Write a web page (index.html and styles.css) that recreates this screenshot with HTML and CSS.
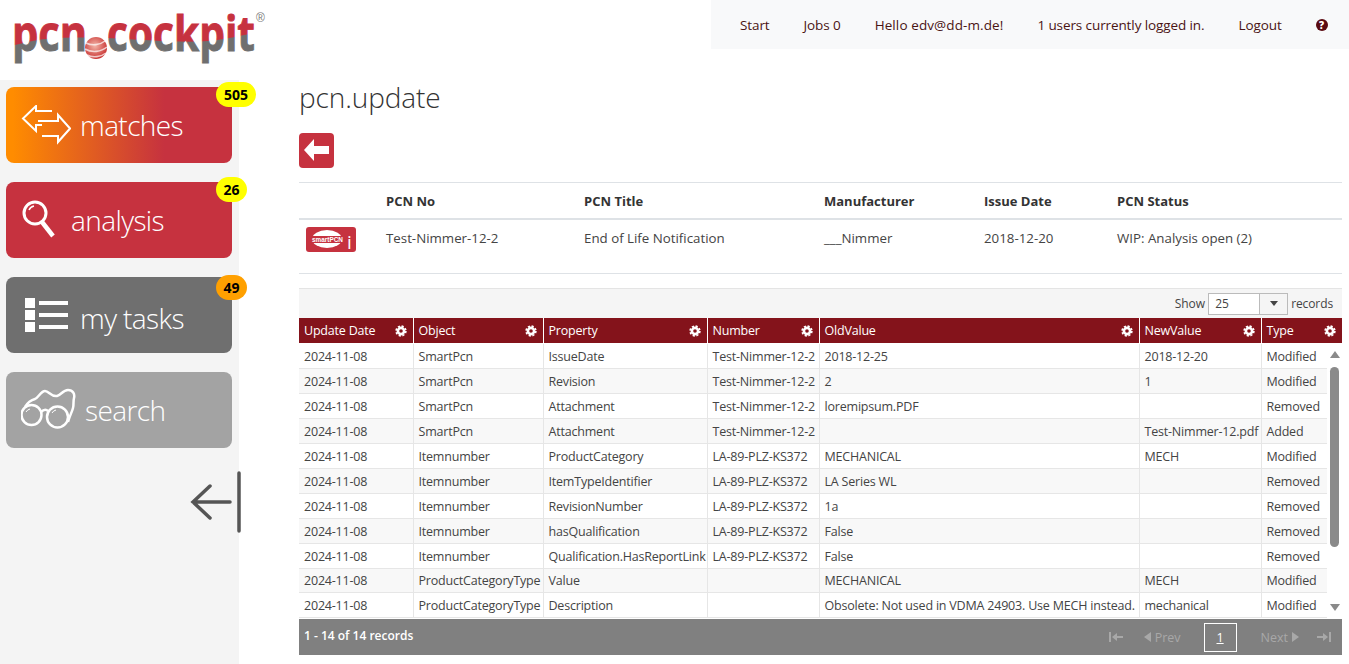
FILE: index.html
```html
<!DOCTYPE html>
<html lang="en">
<head>
    <meta charset="UTF-8">
    <meta name="viewport" content="width=device-width, initial-scale=1.0">
    <title>pcn.cockpit - pcn.update</title>
    <link rel="stylesheet" href="styles.css">
</head>
<body>
    <svg class="defs" width="0" height="0">
        <defs>
            <symbol id="gear" viewBox="0 0 12 12">
                <circle cx="6" cy="6" r="3.1" fill="none" stroke="#fff" stroke-width="2.6"/>
                <circle cx="6" cy="6" r="4.9" fill="none" stroke="#fff" stroke-width="1.6" stroke-dasharray="2.2 1.65"/>
            </symbol>
        </defs>
    </svg>

    <header class="topbar">
        <div class="logo">
            <svg width="270" height="80" viewBox="0 0 270 80">
                <defs>
                    <pattern id="logoPcn" patternUnits="userSpaceOnUse" width="320" height="80">
                        <rect width="320" height="80" fill="#c6323f"/>
                        <path d="M0 46 C24 40 47 36 105 38 L320 38 L320 80 L0 80 Z" fill="#6f6f6f"/>
                    </pattern>
                    <pattern id="logoCockpit" patternUnits="userSpaceOnUse" width="320" height="80">
                        <rect width="320" height="80" fill="#c6323f"/>
                        <path d="M0 38 C48 40 103 44 133 40 C157 37 181 32 217 26 L320 26 L320 80 L0 80 Z" fill="#6f6f6f"/>
                    </pattern>
                    <radialGradient id="ball" cx="45%" cy="40%" r="65%">
                        <stop offset="0" stop-color="#f3b5a8"/>
                        <stop offset="1" stop-color="#c62a2a"/>
                    </radialGradient>
                </defs>
                <g transform="translate(12 0) scale(.85 1)">
                    <text class="logo-text" y="51" fill="url(#logoPcn)" stroke="url(#logoPcn)" stroke-width="0.9">pcn</text>
                </g>
                <g transform="translate(107 0) scale(.83 1)">
                    <text class="logo-text" y="51" fill="url(#logoCockpit)" stroke="url(#logoCockpit)" stroke-width="0.9">cockpit</text>
                </g>
                <circle cx="96" cy="48" r="11" fill="url(#ball)"/>
                <path d="M86 43 C92 46 100 45 105 41 M85 49 C92 53 101 52 107 47 M87 55 C93 58 101 57 106 53" fill="none" stroke="#fff" stroke-width="1.6" opacity=".7"/>
            </svg>
            <span class="logo-reg">®</span>
        </div>
        <nav class="topnav">
            <a>Start</a>
            <a>Jobs 0</a>
            <a class="nav-hello">Hello edv@dd-m.de!</a>
            <a>1 users currently logged in.</a>
            <a>Logout</a>
            <span class="help">?</span>
        </nav>
    </header>

    <div class="layout">
        <aside class="sidebar">
            <a class="tile tile-matches">
                <svg class="tile-icon" width="50" height="40" viewBox="0 0 50 40" fill="none" stroke="#fff" stroke-width="2">
                    <path d="M31 6 H15 V1 L2 13.5 L15 26 V20 H21"/>
                    <path d="M21 31 H37 V37 L49 23.5 L37 10 V16 H17"/>
                </svg>
                <span>matches</span>
                <b class="badge badge-wide">505</b>
            </a>
            <a class="tile tile-analysis">
                <svg class="tile-icon" width="41" height="44" viewBox="0 0 41 44" fill="none" stroke="#fff">
                    <circle cx="14" cy="15" r="11" stroke-width="3"/>
                    <path d="M21 24 L32 38" stroke-width="4.5"/>
                    <path d="M8 12 A7 7 0 0 1 13 8" stroke-width="1.5"/>
                </svg>
                <span>analysis</span>
                <b class="badge">26</b>
            </a>
            <a class="tile tile-tasks">
                <svg class="tile-icon" width="50" height="44" viewBox="0 0 50 44" fill="#fff">
                    <rect x="4" y="5" width="10" height="10"/>
                    <rect x="4" y="17" width="10" height="10"/>
                    <rect x="4" y="29" width="10" height="10"/>
                    <rect x="18" y="8" width="29" height="4"/>
                    <rect x="18" y="20" width="29" height="4"/>
                    <rect x="18" y="32" width="29" height="4"/>
                </svg>
                <span>my tasks</span>
                <b class="badge badge-orange">49</b>
            </a>
            <a class="tile tile-search">
                <svg class="tile-icon" width="55" height="52" viewBox="0 0 55 52" fill="none" stroke="#fff" stroke-width="2.5">
                    <circle cx="10.5" cy="31" r="10"/>
                    <circle cx="36.5" cy="33" r="10.5"/>
                    <path d="M4 23 C7 18 10 16 14 15 C18 13 20 7 24 7 C28 7 30 13 36 12 C40 11 42 6 47 6 C52 6 54 10 53 14 C52 18 53 20 52 24 C51 28 49 31 47 38"/>
                    <path d="M20 28 C23 25 25 25 27 27"/>
                    <path d="M5 28 A6 6 0 0 1 9 25 M31 29 A6 6 0 0 1 35 26" stroke-width="1"/>
                </svg>
                <span>search</span>
            </a>
            <div class="collapse">
                <svg width="52" height="62" viewBox="0 0 52 62" fill="none" stroke="#555" stroke-linecap="round">
                    <path d="M41 31 H4 M21 15 L4 31 L21 47" stroke-width="3.5"/>
                    <path d="M50 2 V60" stroke-width="3.5"/>
                </svg>
            </div>
        </aside>

        <main class="content">
            <h1>pcn.update</h1>
            <a class="back-btn">
                <svg width="35" height="35" viewBox="0 0 35 35" fill="#fff"><path d="M5 17 L15 6 V13 H30 V21 H15 V28 Z"/></svg>
            </a>

            <table class="info-table">
                <thead>
                    <tr>
                        <th class="info-icon"></th>
                        <th class="info-no">PCN No</th>
                        <th class="info-title">PCN Title</th>
                        <th class="info-man">Manufacturer</th>
                        <th class="info-date">Issue Date</th>
                        <th>PCN Status</th>
                    </tr>
                </thead>
                <tbody>
                    <tr>
                        <td class="info-icon">
                            <svg class="smart-icon" width="50" height="25" viewBox="0 0 50 25">
                                <rect width="50" height="25" rx="3" fill="#c6323f"/>
                                <ellipse cx="21" cy="12" rx="15" ry="9" fill="#fff"/>
                                <rect x="5" y="9" width="32" height="7" fill="#c6323f"/>
                                <text class="smart-text" x="6" y="15">smartPCN</text>
                                <text class="smart-i" x="41" y="22">i</text>
                            </svg>
                        </td>
                        <td>Test-Nimmer-12-2</td>
                        <td>End of Life Notification</td>
                        <td>___Nimmer</td>
                        <td>2018-12-20</td>
                        <td>WIP: Analysis open (2)</td>
                    </tr>
                </tbody>
            </table>

            <section class="grid">
                <div class="grid-toolbar">
                    <span>Show</span>
                    <div class="size-select">
                        <span class="size-value">25</span>
                        <span class="size-arrow"><i></i></span>
                    </div>
                    <span class="size-label">records</span>
                </div>
                <table class="grid-table grid-head">
                    <colgroup>
                        <col class="c-date"><col class="c-object"><col class="c-prop"><col class="c-num"><col class="c-old"><col class="c-new"><col class="c-type-head">
                    </colgroup>
                    <thead>
                        <tr>
                            <th><div>Update Date<svg><use href="#gear"/></svg></div></th>
                            <th><div>Object<svg><use href="#gear"/></svg></div></th>
                            <th><div>Property<svg><use href="#gear"/></svg></div></th>
                            <th><div>Number<svg><use href="#gear"/></svg></div></th>
                            <th><div>OldValue<svg><use href="#gear"/></svg></div></th>
                            <th><div>NewValue<svg><use href="#gear"/></svg></div></th>
                            <th><div>Type<svg><use href="#gear"/></svg></div></th>
                        </tr>
                    </thead>
                </table>
                <div class="grid-body">
                    <table class="grid-table">
                        <colgroup>
                            <col class="c-date"><col class="c-object"><col class="c-prop"><col class="c-num"><col class="c-old"><col class="c-new"><col class="c-type">
                        </colgroup>
                        <tbody>
                            <tr><td>2024-11-08</td><td>SmartPcn</td><td>IssueDate</td><td>Test-Nimmer-12-2</td><td>2018-12-25</td><td>2018-12-20</td><td>Modified</td></tr>
                            <tr><td>2024-11-08</td><td>SmartPcn</td><td>Revision</td><td>Test-Nimmer-12-2</td><td>2</td><td>1</td><td>Modified</td></tr>
                            <tr><td>2024-11-08</td><td>SmartPcn</td><td>Attachment</td><td>Test-Nimmer-12-2</td><td>loremipsum.PDF</td><td></td><td>Removed</td></tr>
                            <tr><td>2024-11-08</td><td>SmartPcn</td><td>Attachment</td><td>Test-Nimmer-12-2</td><td></td><td>Test-Nimmer-12.pdf</td><td>Added</td></tr>
                            <tr><td>2024-11-08</td><td>Itemnumber</td><td>ProductCategory</td><td>LA-89-PLZ-KS372</td><td>MECHANICAL</td><td>MECH</td><td>Modified</td></tr>
                            <tr><td>2024-11-08</td><td>Itemnumber</td><td>ItemTypeIdentifier</td><td>LA-89-PLZ-KS372</td><td>LA Series WL</td><td></td><td>Removed</td></tr>
                            <tr><td>2024-11-08</td><td>Itemnumber</td><td>RevisionNumber</td><td>LA-89-PLZ-KS372</td><td>1a</td><td></td><td>Removed</td></tr>
                            <tr><td>2024-11-08</td><td>Itemnumber</td><td>hasQualification</td><td>LA-89-PLZ-KS372</td><td>False</td><td></td><td>Removed</td></tr>
                            <tr><td>2024-11-08</td><td>Itemnumber</td><td>Qualification.HasReportLink</td><td>LA-89-PLZ-KS372</td><td>False</td><td></td><td>Removed</td></tr>
                            <tr class="row-short"><td>2024-11-08</td><td>ProductCategoryType</td><td>Value</td><td></td><td>MECHANICAL</td><td>MECH</td><td>Modified</td></tr>
                            <tr><td>2024-11-08</td><td>ProductCategoryType</td><td>Description</td><td></td><td>Obsolete: Not used in VDMA 24903. Use MECH instead.</td><td>mechanical</td><td>Modified</td></tr>
                        </tbody>
                    </table>
                    <div class="scrollbar">
                        <i class="sb-up"></i>
                        <i class="sb-thumb"></i>
                        <i class="sb-down"></i>
                    </div>
                </div>
                <div class="pager">
                    <span class="pager-info">1 - 14 of 14 records</span>
                    <div class="pager-links">
                        <svg width="14" height="10" viewBox="0 0 14 10"><path d="M0 0H2V10H0ZM3 5L8 1V4H14V6H8V9Z"/></svg>
                        <span class="pager-step pager-prev"><svg width="7" height="10" viewBox="0 0 7 10"><path d="M7 0V10L0 5Z"/></svg>Prev</span>
                        <a class="pager-current">1</a>
                        <span class="pager-step pager-next">Next<svg width="7" height="10" viewBox="0 0 7 10"><path d="M0 0V10L7 5Z"/></svg></span>
                        <svg width="14" height="10" viewBox="0 0 14 10"><path d="M14 0H12V10H14ZM11 5L6 1V4H0V6H6V9Z"/></svg>
                    </div>
                </div>
            </section>
        </main>
    </div>
</body>
</html>
```

FILE: styles.css
```css
html, body {
    height: 100%;
}

body {
    margin: 0;
    font-family: "Open Sans", "Noto Sans", sans-serif;
    font-size: 13px;
    color: #444;
    background-color: #fff;
    overflow: hidden;
}

.defs {
    position: absolute;
}

/* top */
.topbar {
    display: flex;
    justify-content: space-between;
    align-items: flex-start;
    height: 80px;
}

.logo {
    position: relative;
}

.logo svg {
    display: block;
}

.logo-text {
    font-family: "Open Sans", sans-serif;
    font-size: 49px;
    font-weight: 700;
}

.logo-reg {
    position: absolute;
    top: 11px;
    left: 256px;
    font-family: "Liberation Sans", sans-serif;
    font-size: 12px;
    color: #777;
}

.topnav {
    display: flex;
    align-items: center;
    gap: 34px;
    width: 638px;
    height: 49px;
    box-sizing: border-box;
    padding-left: 29px;
    background-color: #f8f9fa;
    color: #4a1414;
    font-size: 13.5px;
    letter-spacing: -0.1px;
}

.nav-hello {
    letter-spacing: 0.1px;
}

.help {
    display: flex;
    align-items: center;
    justify-content: center;
    width: 12px;
    height: 12px;
    border-radius: 50%;
    background-color: #5a0a10;
    color: #fff;
    font-size: 10px;
    font-weight: 800;
    letter-spacing: 0;
}

/* sidebar */
.layout {
    display: flex;
    height: 584px;
}

.sidebar {
    flex: 0 0 239px;
    box-sizing: border-box;
    padding: 7px 7px 0 6px;
    background-color: #f4f4f4;
}

.tile {
    position: relative;
    display: flex;
    align-items: center;
    gap: 9px;
    height: 76px;
    margin-bottom: 19px;
    padding-left: 15px;
    border-radius: 8px;
    color: #fff;
    font-size: 28px;
    font-weight: 300;
    letter-spacing: -0.6px;
}

.tile-icon {
    flex: none;
}

.tile-matches {
    background: linear-gradient(to right, #ff8c00 3%, #c6323f 70%);
}

.tile-analysis {
    background-color: #c6323f;
}

.tile-tasks {
    background-color: #6f6f6f;
}

.tile-tasks span {
    margin-top: 5px;
}

.tile-search {
    background-color: #a3a3a3;
}

.badge {
    position: absolute;
    top: -5px;
    left: 210px;
    min-width: 21px;
    height: 25px;
    padding: 0 5px;
    border-radius: 13px;
    background-color: #ffff00;
    color: #000;
    font-size: 14px;
    font-weight: 700;
    line-height: 25px;
    letter-spacing: 0;
    text-align: center;
}

.badge-wide {
    min-width: 30px;
}

.badge-orange {
    top: -2px;
    background-color: #ffa000;
}

.collapse {
    display: flex;
    justify-content: flex-end;
    margin: 23px -9px 0 0;
}

/* main */
.content {
    flex: 1;
    min-width: 0;
    padding-left: 60px;
    padding-right: 7px;
}

h1 {
    margin: 0;
    height: 53px;
    color: #333;
    font-size: 28px;
    font-weight: 300;
    line-height: 35px;
    letter-spacing: -0.1px;
}

.back-btn {
    display: block;
    width: 35px;
    height: 35px;
    border-radius: 4px;
    background-color: #c6323f;
}

.back-btn svg {
    display: block;
}

.info-table {
    width: 100%;
    margin-top: 14px;
    border-collapse: collapse;
    border-top: 1px solid #dee2e6;
    border-bottom: 1px solid #dee2e6;
}

.info-table th {
    height: 35px;
    padding: 0 0 0 7px;
    border-bottom: 2px solid #dee2e6;
    color: #333;
    font-weight: 700;
    text-align: left;
}

.info-table td {
    height: 53px;
    padding: 0 0 0 7px;
    vertical-align: top;
    font-size: 13.3px;
    line-height: 36px;
}

.info-icon {
    width: 73px;
}

.info-table td .smart-icon {
    display: block;
    margin-top: 7px;
    overflow: visible;
}

.info-no {
    width: 191px;
}

.info-title {
    width: 233px;
}

.info-man {
    width: 153px;
}

.info-date {
    width: 126px;
}

.smart-text {
    font-family: "Liberation Sans", sans-serif;
    font-size: 6.4px;
    font-weight: 700;
    fill: #fff;
}

.smart-i {
    font-family: "Open Sans", sans-serif;
    font-size: 19px;
    fill: #fff;
}

/* grid */
.grid {
    margin-top: 14px;
    border-top: 1px solid #e4e4e4;
}

.grid-toolbar {
    display: flex;
    justify-content: flex-end;
    align-items: center;
    gap: 3px;
    height: 29px;
    padding-right: 9px;
    background-color: #f5f5f5;
    font-size: 12px;
}

.size-select {
    display: flex;
    width: 78px;
    height: 20px;
    border: 1px solid #bbb;
    background-color: #fff;
    line-height: 20px;
}

.size-label {
    letter-spacing: -0.1px;
}

.size-value {
    flex: 1;
    padding-left: 6px;
}

.size-arrow {
    display: flex;
    align-items: center;
    justify-content: center;
    width: 27px;
    border-left: 1px solid #bbb;
    background-color: #f5f5f5;
}

.size-arrow i {
    border-top: 5px solid #444;
    border-left: 4px solid transparent;
    border-right: 4px solid transparent;
}

.grid-table {
    table-layout: fixed;
    border-collapse: collapse;
    font-size: 12.5px;
    letter-spacing: -0.2px;
}

.grid-head {
    width: 1043px;
}

.c-date { width: 114px; }
.c-object { width: 130px; }
.c-prop { width: 164px; }
.c-num { width: 112px; }
.c-old { width: 320px; }
.c-new { width: 122px; }
.c-type { width: 66px; }
.c-type-head { width: 81px; }

.grid-head th {
    height: 25px;
    padding: 0 5px;
    border-right: 1px solid #fff;
    background-color: #84131b;
    color: #fff;
    font-weight: 400;
    text-align: left;
}

.grid-head th:last-child {
    border-right: 0;
}

.grid-head th div {
    display: flex;
    justify-content: space-between;
    align-items: center;
}

.grid-head svg {
    width: 12px;
    height: 12px;
    margin-right: 1px;
}

.grid-body {
    position: relative;
    height: 276px;
    padding-top: 1px;
    box-sizing: border-box;
    overflow: hidden;
}

.grid-body .grid-table {
    width: 1028px;
}

.grid-body td {
    height: 24px;
    padding: 0 5px;
    border-right: 1px solid #e6e6e6;
    border-bottom: 1px solid #e6e6e6;
    white-space: nowrap;
    overflow: hidden;
}

.grid-body .row-short td {
    height: 23px;
}

.grid-body tr:nth-child(even) td {
    background-color: #f8f8f8;
}

.scrollbar {
    position: absolute;
    top: 0;
    right: 0;
    bottom: 0;
    width: 15px;
    background-color: #fff;
}

.scrollbar i {
    position: absolute;
    left: 3px;
}

.sb-up {
    top: 8px;
    border-bottom: 7px solid #8a8a8a;
    border-left: 5px solid transparent;
    border-right: 5px solid transparent;
}

.sb-down {
    bottom: 8px;
    border-top: 7px solid #8a8a8a;
    border-left: 5px solid transparent;
    border-right: 5px solid transparent;
}

.scrollbar .sb-thumb {
    top: 24px;
    left: 3px;
    width: 9px;
    height: 180px;
    border-radius: 5px;
    background-color: #8a8a8a;
}

.pager {
    display: flex;
    justify-content: space-between;
    align-items: center;
    height: 36px;
    padding: 0 11px 0 5px;
    background-color: #808080;
    color: #fff;
    font-size: 12px;
}

.pager-info {
    padding-bottom: 4px;
    font-weight: 600;
}

.pager-links {
    display: flex;
    align-items: center;
    color: #a8a8a8;
    fill: #a8a8a8;
    font-size: 12.5px;
}

.pager-step {
    display: flex;
    align-items: center;
    gap: 4px;
}

.pager-prev {
    margin: 0 23px 0 21px;
}

.pager-next {
    margin: 0 18px 0 24px;
}

.pager-current {
    width: 31px;
    height: 27px;
    border: 1px solid #fff;
    color: #fff;
    line-height: 28px;
    text-align: center;
    text-decoration: underline;
}
```
